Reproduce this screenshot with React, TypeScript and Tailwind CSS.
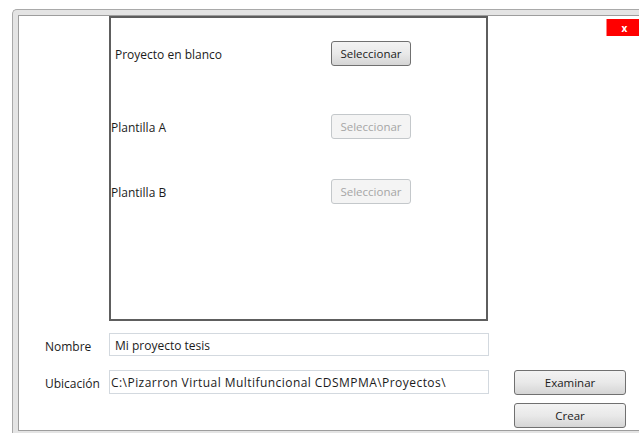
import React from "react";

const font = { fontFamily: '"Open Sans", "Noto Sans", Arial, sans-serif' };

function WinButton({
  label,
  disabled,
  className = "",
}: {
  label: string;
  disabled?: boolean;
  className?: string;
}) {
  return (
    <button
      disabled={disabled}
      className={
        "flex items-center justify-center rounded-[3px] border pt-[1px] text-[11.5px] leading-none " +
        (disabled
          ? "border-[#c4c8cb] bg-[#f4f4f4] text-[#a6a6a6] "
          : "border-[#707070] bg-gradient-to-b from-[#f3f3f3] via-[#e9e9e9] to-[#d5d5d5] text-[#1b1b1b] ") +
        className
      }
    >
      {label}
    </button>
  );
}

const templates = [
  { name: "Proyecto en blanco", enabled: true, pad: "pl-[4px]", mt: "mt-[23px]" },
  { name: "Plantilla A", enabled: false, pad: "pl-0", mt: "mt-[48px]" },
  { name: "Plantilla B", enabled: false, pad: "pl-0", mt: "mt-[40px]" },
];

export default function App() {
  return (
    <div
      className="relative h-[433px] w-[639px] overflow-hidden bg-white text-[#1b1b1b]"
      style={font}
    >
      {/* window chrome */}
      <div className="ml-[12px] mt-[9px] h-[424px] w-[640px] rounded-tl-[5px] border-l border-t border-[#a9a9a9] bg-[#e4e4e4] pl-[5px] pt-[5px]">
        <div className="relative h-[416px] w-full border-b border-l border-t border-[#9d9d9d] bg-white">
          {/* close button */}
          <div className="absolute left-[587px] top-[3px] flex h-[17px] w-[40px] items-center justify-center border-l border-[#ff8080] bg-[#ff0000] pr-[4px] text-[10px] font-bold leading-none text-white">
            x
          </div>

          {/* template list */}
          <div className="ml-[90px] h-[305px] w-[379px] border-2 border-[#5e5e5e]">
            {templates.map((t) => (
              <div key={t.name} className={"flex items-center " + t.mt}>
                <div className={"w-[220px] pt-[2px] text-[12px] " + t.pad}>{t.name}</div>
                <WinButton
                  label="Seleccionar"
                  disabled={!t.enabled}
                  className="h-[25px] w-[80px]"
                />
              </div>
            ))}
          </div>

          {/* project fields */}
          <div className="mt-[12px] flex items-center">
            <div className="w-[90px] pl-[26px] pt-[4px] text-[12px]">Nombre</div>
            <div className="flex h-[23px] w-[380px] items-center border border-[#d3d9df] pl-[5px] pt-[2px] text-[12px]">
              Mi proyecto tesis
            </div>
          </div>
          <div className="mt-[14px] flex items-start">
            <div className="flex h-[24px] w-[90px] items-center pl-[26px] pt-[4px] text-[12px]">
              Ubicación
            </div>
            <div className="flex h-[24px] w-[380px] items-center border border-[#d3d9df] pl-[1px] pt-[2px] text-[12px] tracking-[0.45px]">
              C:\Pizarron Virtual Multifuncional CDSMPMA\Proyectos\
            </div>
            <div className="ml-[25px] flex flex-col gap-[8px]">
              <WinButton label="Examinar" className="h-[25px] w-[112px]" />
              <WinButton label="Crear" className="h-[25px] w-[112px]" />
            </div>
          </div>
        </div>
      </div>
    </div>
  );
}
